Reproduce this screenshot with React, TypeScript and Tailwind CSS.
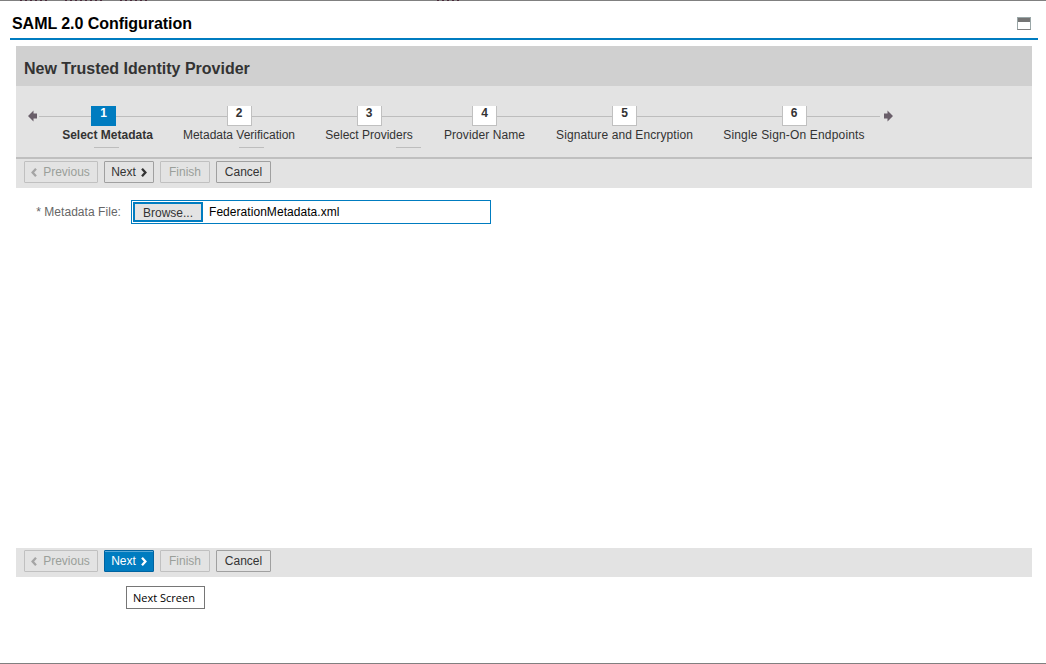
const font = { fontFamily: '"Liberation Sans", Arial, sans-serif' };

const steps = [
  { n: "1", label: "Select Metadata", w: "w-[121px]", t: "", active: true },
  { n: "2", label: "Metadata Verification", w: "w-[142px]", t: "" },
  { n: "3", label: "Select Providers", w: "w-[118px]", t: "" },
  { n: "4", label: "Provider Name", w: "w-[113px]", t: "tracking-[0.08px]" },
  { n: "5", label: "Signature and Encryption", w: "w-[167px]", t: "tracking-[0.09px]" },
  { n: "6", label: "Single Sign-On Endpoints", w: "w-[172px]", t: "tracking-[0.17px]" },
];

function Chevron({ dir, className }: { dir: "l" | "r"; className: string }) {
  return (
    <svg width="6" height="9" viewBox="0 0 6 9" className={className}>
      <path
        d={dir === "r" ? "M1 0.8 L4.4 4.5 L1 8.2" : "M5 0.8 L1.6 4.5 L5 8.2"}
        fill="none"
        stroke="currentColor"
        strokeWidth="2.3"
      />
    </svg>
  );
}

function Arrow({ dir }: { dir: "l" | "r" }) {
  return (
    <svg width="9" height="12" viewBox="0 0 9 12" className="shrink-0 text-[#6a5f6a]">
      <path
        d={
          dir === "l"
            ? "M0 6 L5.5 0.5 L5.5 3.5 L9 3.5 L9 8.5 L5.5 8.5 L5.5 11.5 Z"
            : "M9 6 L3.5 0.5 L3.5 3.5 L0 3.5 L0 8.5 L3.5 8.5 L3.5 11.5 Z"
        }
        fill="currentColor"
      />
    </svg>
  );
}

function Toolbar({ hot }: { hot?: boolean }) {
  const off = "h-[22px] border border-[#c0c0c0] rounded-[1px] text-[#9a9f9a] flex items-center justify-center";
  const on = "h-[22px] border border-[#a0a0a0] rounded-[1px] text-[#333333] flex items-center justify-center";
  return (
    <div className="flex items-start gap-[6px] h-[29px] pt-[2px] pl-2 bg-[#e3e3e3] text-xs">
      <div className={`${off} w-[74px] gap-[6px] pr-px`}>
        <Chevron dir="l" className="text-[#a5a5a5]" />
        Previous
      </div>
      {hot ? (
        <div className="h-[22px] w-[50px] border border-[#0063a0] rounded-[1px] bg-[#007cc0] text-white flex items-center justify-center gap-[5px] shadow-[inset_0_1px_0_#5aa9d8]">
          Next
          <Chevron dir="r" className="text-white" />
        </div>
      ) : (
        <div className={`${on} w-[50px] gap-[5px]`}>
          Next
          <Chevron dir="r" className="text-[#333333]" />
        </div>
      )}
      <div className={`${off} w-[50px]`}>Finish</div>
      <div className={`${on} w-[55px]`}>Cancel</div>
    </div>
  );
}

const marks =
  "h-px bg-[repeating-linear-gradient(90deg,#4a2a3a_0,#4a2a3a_2px,transparent_2px,transparent_5px)]";

export default function App() {
  return (
    <div className="relative w-[1046px] h-[664px] bg-white overflow-hidden flex flex-col" style={font}>
      <div className="h-px shrink-0 bg-[#808080] flex">
        <div className={`${marks} ml-[20px] w-7`} />
        <div className={`${marks} ml-[17px] w-10`} />
        <div className={`${marks} ml-[15px] w-[30px]`} />
        <div className={`${marks} ml-[287px] w-[23px]`} />
      </div>
      <div className="ml-[10px] mr-2 h-[39px] shrink-0 border-b-2 border-[#007cc0] flex items-center justify-between pt-2 pl-[2px] pr-[7px]">
        <div className="text-base font-bold text-black tracking-[-0.05px]">SAML 2.0 Configuration</div>
        <div className="w-[14px] h-[13px] border border-[#9aa7a8] border-b-[#808080] bg-white flex flex-col">
          <div className="h-1 shrink-0 bg-[#757575]" />
        </div>
      </div>

      <div className="ml-4 mr-[14px] mt-[6px] flex-1 flex flex-col">
        <div className="h-10 shrink-0 bg-[#d0d0d0] flex items-center pt-[6px] pl-2 text-base font-bold text-[#333333]">
          New Trusted Identity Provider
        </div>

        <div className="h-[71px] shrink-0 bg-[#e3e3e3] flex items-start pt-5 pl-3">
          <div className="mt-1"><Arrow dir="l" /></div>
          <div className="relative flex ml-[10px]">
            <div className="absolute left-[-8px] right-0 top-[10px] h-px bg-[#bdbdbd]" />
            {steps.map((s) => (
              <div key={s.n} className={`${s.w} relative flex flex-col items-center`}>
                {s.active ? (
                  <div className="w-[25px] h-5 mr-2 bg-[#007cc0] text-white font-bold text-xs leading-[14px] flex items-start justify-center">
                    {s.n}
                  </div>
                ) : (
                  <div className="w-[25px] h-5 bg-white border border-t-0 border-[#c0c0c0] text-[#333333] font-bold text-xs leading-[14px] flex items-start justify-center">
                    {s.n}
                  </div>
                )}
                <div className={`mt-px text-xs whitespace-nowrap text-[#333333] ${s.t} ${s.active ? "font-bold" : ""}`}>
                  {s.label}
                </div>
                {s.n === "1" && <div className="self-start ml-[47px] mt-1 w-[25px] h-px bg-[#bdbdbd]" />}
                {s.n === "2" && <div className="self-start ml-[71px] mt-1 w-[25px] h-px bg-[#bdbdbd]" />}
                {s.n === "3" && <div className="self-start ml-[86px] mt-1 w-[25px] h-px bg-[#bdbdbd]" />}
              </div>
            ))}
          </div>
          <div className="mt-1 ml-1"><Arrow dir="r" /></div>
        </div>

        <div className="h-[2px] shrink-0 bg-[#bfbfbf]" />
        <Toolbar />

        <div className="mt-3 flex items-center text-xs shrink-0">
          <div className="w-[105px] text-right text-[#666666] tracking-[0.05px]">* Metadata File:</div>
          <div className="ml-[10px] w-[360px] h-6 border border-[#007cc0] flex items-center pl-px">
            <div className="w-[70px] h-5 border-2 border-[#007cc0] bg-[#e3e3e3] text-[#333333] flex items-center justify-center pt-px">
              Browse...
            </div>
            <div className="ml-[6px] text-black tracking-[0.05px]">FederationMetadata.xml</div>
          </div>
        </div>

        <div className="mt-[324px]">
          <Toolbar hot />
        </div>

        <div
          className="mt-[9px] ml-[110px] w-[79px] h-[23px] border border-[#767676] bg-white text-[11px] text-black flex items-center pl-[6px] pt-px"
          style={{ fontFamily: '"Open Sans", sans-serif' }}
        >
          Next Screen
        </div>
      </div>

      <div className="h-px shrink-0 bg-[#808080]" />
    </div>
  );
}
